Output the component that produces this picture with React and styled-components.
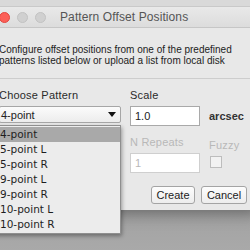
import React from "react";
import styled, { createGlobalStyle } from "styled-components";

const GlobalStyle = createGlobalStyle`
  html, body {
    margin: 0;
    padding: 0;
    width: 250px;
    height: 250px;
    overflow: hidden;
    background: linear-gradient(#7d7d7d, #a9a9a9);
  }
  body {
    font-family: "Liberation Sans", Arial, sans-serif;
  }
`;

const Window = styled.div`
  position: relative;
  width: 268px;
  margin-left: -10px;
  background: #e8e8e8;
  box-shadow: 0 4px 14px rgba(0, 0, 0, 0.35);
`;

const TopStrip = styled.div`
  height: 6px;
  background: #d9d9d9;
  border-bottom: 1px solid #c9c9c9;
`;

const TitleBar = styled.div`
  position: relative;
  height: 20px;
  display: flex;
  align-items: center;
  background: linear-gradient(#e9e9e9, #dcdcdc);
  border-bottom: 1px solid #c6c6c6;
`;

const Lights = styled.div`
  display: flex;
  gap: 7px;
  padding-left: 9px;
`;

const Light = styled.span`
  width: 11px;
  height: 11px;
  border-radius: 50%;
  background: ${(p) => p.$color};
  border: 1px solid ${(p) => p.$edge};
  box-sizing: border-box;
`;

const Title = styled.div`
  position: absolute;
  left: 70px;
  top: 3px;
  font-family: "Liberation Sans", Arial, sans-serif;
  font-size: 12px;
  letter-spacing: 0.1px;
  color: #555;
`;

const Body = styled.div`
  padding: 16px 0 6px 9px;
`;

const Description = styled.p`
  margin: 0;
  font-size: 10px;
  line-height: 11px;
  color: #222;
`;

const Separator = styled.div`
  height: 1px;
  background: #cdcdcd;
  margin: 12px 0 0 -9px;
`;

const Form = styled.div`
  display: grid;
  grid-template-columns: 122px 70px auto;
  column-gap: 9px;
  margin-top: 10px;
`;

const Label = styled.div`
  font-size: 11px;
  line-height: 12px;
  height: 12px;
  margin-bottom: 5px;
  color: ${(p) => (p.$dim ? "#b8b8b8" : "#2a2a2a")};
  letter-spacing: 0.2px;
`;

const Select = styled.div`
  box-sizing: border-box;
  height: 17px;
  display: flex;
  align-items: center;
  justify-content: space-between;
  padding: 0 3px 0 0;
  background: linear-gradient(#fbfbfb, #ececec);
  border: 1px solid #a6a6a6;
  border-radius: 2px;
  font-size: 11px;
  color: #222;
`;

const Arrow = styled.span`
  width: 0;
  height: 0;
  border-left: 4px solid transparent;
  border-right: 4px solid transparent;
  border-top: 5px solid #111;
  margin-right: 1px;
`;

const Input = styled.div`
  box-sizing: border-box;
  height: 20px;
  padding: 3px 4px;
  background: #fff;
  border: 1px solid ${(p) => (p.$dim ? "#cfcfcf" : "#a9a9a9")};
  font-size: 11px;
  color: ${(p) => (p.$dim ? "#b8b8b8" : "#222")};
  margin-bottom: ${(p) => (p.$dim ? 0 : 10)}px;
`;

const Unit = styled.div`
  font-size: 11px;
  font-weight: bold;
  color: #333;
  padding-top: 4px;
`;

const Checkbox = styled.div`
  width: 10px;
  height: 10px;
  margin: 2px 0 0 1px;
  background: #f2f2f2;
  border: 1px solid #bdbdbd;
`;

const Buttons = styled.div`
  display: flex;
  justify-content: flex-end;
  gap: 6px;
  padding-right: 11px;
  margin-top: 13px;
`;

const Button = styled.div`
  box-sizing: border-box;
  height: 18px;
  width: ${(p) => p.$w}px;
  display: flex;
  align-items: center;
  justify-content: center;
  background: linear-gradient(#fdfdfd, #ededed);
  border: 1px solid #a4a4a4;
  border-radius: 3px;
  font-size: 11px;
  color: #222;
`;

const List = styled.div`
  position: absolute;
  left: 0;
  top: 125px;
  width: 131px;
  box-sizing: border-box;
  padding: 1px 0;
  background: #ececec;
  border: 1px solid #8f8f8f;
  box-shadow: 1px 2px 4px rgba(0, 0, 0, 0.35);
`;

const Item = styled.div`
  height: 15px;
  line-height: 15px;
  padding-left: 9px;
  font-family: "DejaVu Sans", sans-serif;
  font-size: 10.5px;
  color: #1e1e1e;
  background: ${(p) => (p.$active ? "#a9a9a9" : "transparent")};
`;

const patterns = [
  "4-point",
  "5-point L",
  "5-point R",
  "9-point L",
  "9-point R",
  "10-point L",
  "10-point R",
];

export default function App() {
  return (
    <>
      <GlobalStyle />
      <Window>
        <TopStrip />
        <TitleBar>
          <Lights>
            <Light $color="#fc5f57" $edge="#e2463f" />
            <Light $color="#d0d0d0" $edge="#c2c2c2" />
            <Light $color="#d0d0d0" $edge="#c2c2c2" />
          </Lights>
          <Title>Pattern Offset Positions</Title>
        </TitleBar>
        <Body>
          <Description>
            Configure offset positions from one of the predefined
            <br />
            patterns listed below or upload a list from local disk
          </Description>
          <Separator />
          <Form>
            <div>
              <Label>Choose Pattern</Label>
              <Select>
                <span style={{ paddingLeft: 1 }}>4-point</span>
                <Arrow />
              </Select>
            </div>
            <div>
              <Label>Scale</Label>
              <Input>1.0</Input>
              <Label $dim>N Repeats</Label>
              <Input $dim>1</Input>
            </div>
            <div>
              <Label />
              <Unit>arcsec</Unit>
              <Label $dim style={{ marginTop: 17 }}>Fuzzy</Label>
              <Checkbox />
            </div>
          </Form>
          <Buttons>
            <Button $w={44}>Create</Button>
            <Button $w={46}>Cancel</Button>
          </Buttons>
        </Body>
        <List>
          {patterns.map((p, i) => (
            <Item key={p} $active={i === 0}>
              {p}
            </Item>
          ))}
        </List>
      </Window>
    </>
  );
}
